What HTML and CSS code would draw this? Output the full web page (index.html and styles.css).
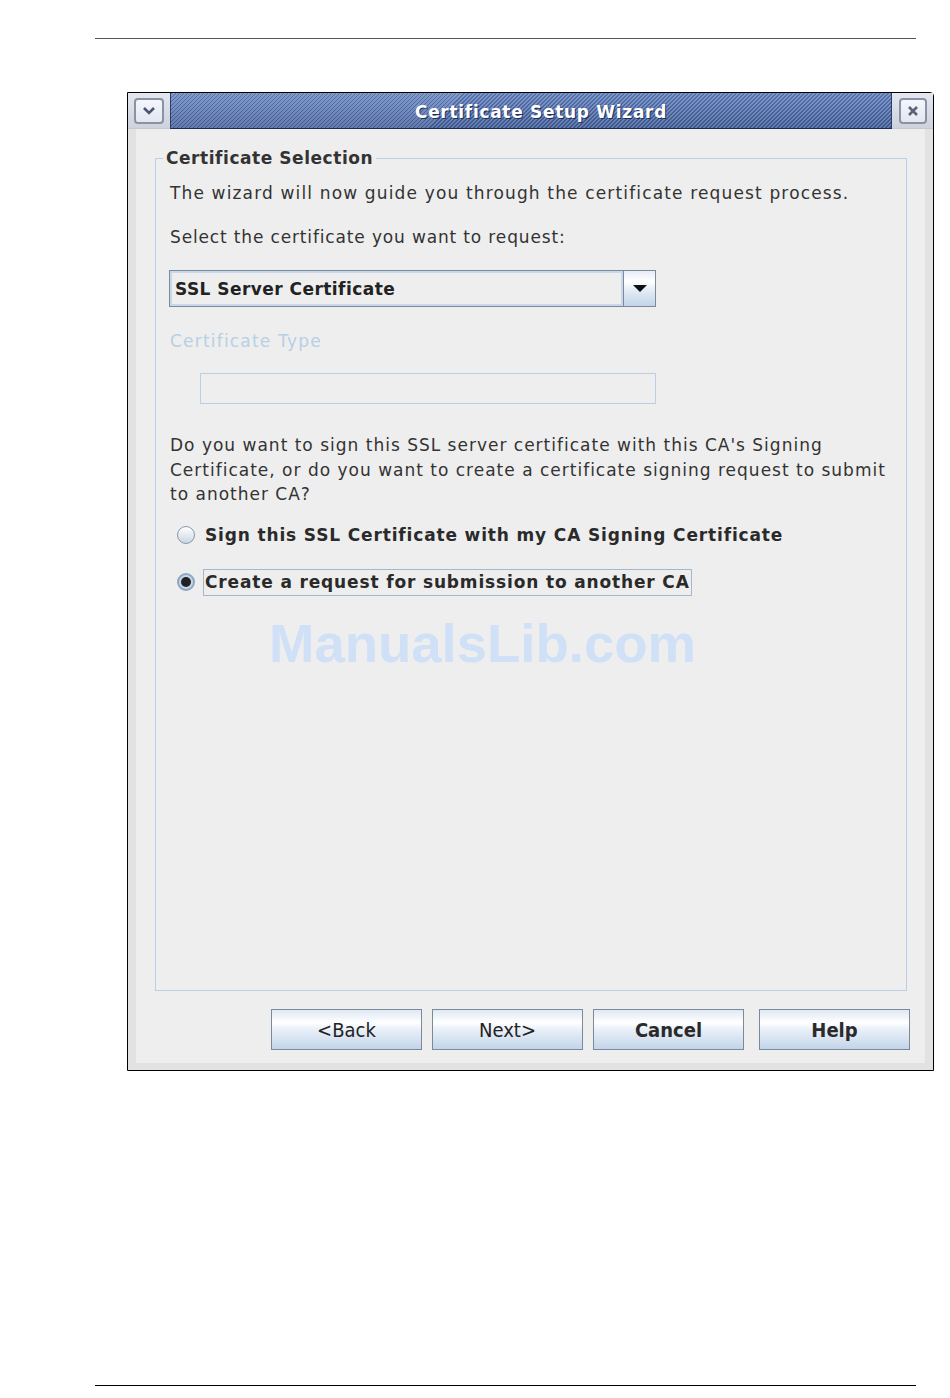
FILE: index.html
```html
<!DOCTYPE html>
<html>
  <head>
    <title>Certificate Setup Wizard</title>
    <link rel="stylesheet" href="styles.css">
  </head>
  <body>
    <div class="page">
      <div class="rule rule-top"></div>

      <div class="window">
        <div class="titlebar">
          <div class="tb-side">
            <span class="tb-btn">
              <svg width="14" height="10" viewBox="0 0 14 10">
                <path d="M2 2 L7 7 L12 2" fill="none" stroke="#4b5572" stroke-width="2.6"/>
              </svg>
            </span>
          </div>
          <div class="tb-title">Certificate Setup Wizard</div>
          <div class="tb-side tb-side-right">
            <span class="tb-btn tb-btn-close">
              <svg width="12" height="12" viewBox="0 0 12 12">
                <path d="M2 2 L10 10 M10 2 L2 10" fill="none" stroke="#5a6478" stroke-width="2.6"/>
              </svg>
            </span>
          </div>
        </div>

        <div class="frame">
          <div class="content">
            <fieldset class="group">
              <legend>Certificate Selection</legend>
              <p class="intro">The wizard will now guide you through the certificate request process.</p>
              <p class="intro intro-second">Select the certificate you want to request:</p>

              <div class="combo">
                <span class="combo-text">SSL Server Certificate</span>
                <span class="combo-arrow">
                  <svg width="14" height="7" viewBox="0 0 14 7"><polygon points="0,0 14,0 7,7" fill="#111"/></svg>
                </span>
              </div>

              <div class="disabled-label">Certificate Type</div>
              <div class="disabled-field"></div>

              <p class="question">Do you want to sign this SSL server certificate with this CA's Signing<br>Certificate, or do you want to create a certificate signing request to submit<br>to another CA?</p>

              <div class="radios">
                <label class="radio">
                  <span class="radio-dot"></span>
                  <span class="radio-text">Sign this SSL Certificate with my CA Signing Certificate</span>
                </label>
                <label class="radio radio-checked">
                  <span class="radio-dot"><span class="radio-mark"></span></span>
                  <span class="radio-text radio-focus">Create a request for submission to another CA</span>
                </label>
              </div>

              <div class="watermark">ManualsLib.com</div>
            </fieldset>

            <div class="buttons">
              <button class="button button-light">&lt;Back</button>
              <button class="button button-light">Next&gt;</button>
              <button class="button">Cancel</button>
              <button class="button button-help">Help</button>
            </div>
          </div>
        </div>
      </div>

      <div class="rule rule-bottom"></div>
    </div>
  </body>
</html>
```

FILE: styles.css
```css
:root {
  --panel: #eeeeee;
  --frame-gray: #e2e2e2;
  --group-line: #b8cfe5;
  --control-border: #7a8a99;
  --text-primary: #333333;
  --watermark: #cfe0f7;
}

body {
  margin: 0;
  background: #ffffff;
  font-family: 'DejaVu Sans', sans-serif;
  color: var(--text-primary);
}

.page {
  height: 1398px;
  box-sizing: border-box;
  padding: 38px 0 12px;
  display: flex;
  flex-direction: column;
}

.rule {
  margin-left: 95px;
  width: 821px;
  height: 1px;
}

.rule-top {
  background: #555555;
}

.rule-bottom {
  margin-top: auto;
  background: #000000;
}

/* Window frame */
.window {
  margin: 53px 0 0 127px;
  width: 807px;
  height: 979px;
  box-sizing: border-box;
  border: 1px solid #000000;
  border-top-right-radius: 4px;
  background: var(--frame-gray);
  display: flex;
  flex-direction: column;
}

.titlebar {
  display: flex;
  height: 36px;
}

.tb-side {
  width: 42px;
  display: flex;
  align-items: center;
  justify-content: center;
  background: linear-gradient(#e4e7ee, #cdd2dc);
  border-bottom: 1px solid #c4c8d0;
}

.tb-side-right {
  width: 41px;
}

.tb-btn {
  width: 26px;
  height: 22px;
  border: 2px solid #8a92a4;
  border-radius: 4px;
  background: linear-gradient(#f4f6fb, #e2e7f1);
  display: flex;
  align-items: center;
  justify-content: center;
}

.tb-btn-close {
  width: 24px;
}

.tb-title {
  flex: 1;
  box-sizing: border-box;
  padding-left: 20px;
  border-left: 1px solid #2c3c6c;
  border-right: 1px solid #2c3c6c;
  border-bottom: 1px solid #1d2a52;
  background:
    linear-gradient(rgba(255, 255, 255, 0.1), rgba(0, 0, 0, 0.14)),
    repeating-linear-gradient(135deg, #4562a2 0 1.3px, #7490c8 1.3px 2.83px);
  color: #ffffff;
  font-size: 17px;
  font-weight: bold;
  letter-spacing: 0.7px;
  text-align: center;
  line-height: 39px;
  text-shadow: 1px 1px 0 #1e2d5c;
}

.frame {
  flex: 1;
  display: flex;
  padding: 0 8px 7px;
}

.content {
  flex: 1;
  background: var(--panel);
  display: flex;
  flex-direction: column;
  padding: 19px 15px 13px 19px;
}

/* Group box */
.group {
  flex: 1;
  min-width: 0;
  margin: 0 3px 0 0;
  padding: 14px 18px 0 14px;
  border: 1px solid var(--group-line);
}

.group legend {
  margin-left: -7px;
  padding: 0 3px;
  font-size: 17px;
  font-weight: bold;
  line-height: 20px;
  letter-spacing: 0.55px;
}

.intro {
  margin: 0;
  font-size: 17px;
  line-height: 22px;
  letter-spacing: 1.15px;
}

.intro-second {
  margin-top: 22px;
  letter-spacing: 0.85px;
}

.combo {
  margin: 22px 0 0 -1px;
  width: 487px;
  height: 37px;
  box-sizing: border-box;
  border: 1px solid var(--control-border);
  display: flex;
}

.combo-text {
  flex: 1;
  border: 2px solid #c8d8ea;
  background: var(--panel);
  display: flex;
  align-items: center;
  padding: 1px 0 0 3px;
  font-size: 17px;
  font-weight: bold;
  letter-spacing: 0.45px;
  color: #222222;
}

.combo-arrow {
  width: 31px;
  border-left: 1px solid var(--control-border);
  background: linear-gradient(#e6edf6 0%, #ffffff 30%, #e4ecf6 55%, #c2d4e8 100%);
  display: flex;
  align-items: center;
  justify-content: center;
}

.disabled-label {
  margin-top: 23px;
  font-size: 17px;
  line-height: 22px;
  letter-spacing: 1.2px;
  color: var(--group-line);
}

.disabled-field {
  margin: 21px 0 0 30px;
  width: 456px;
  height: 31px;
  box-sizing: border-box;
  border: 1px solid var(--group-line);
}

.question {
  margin: 29px 0 0;
  font-size: 17px;
  line-height: 24.5px;
  letter-spacing: 1px;
}

/* Radio buttons */
.radios {
  margin-top: 15px;
  display: flex;
  flex-direction: column;
  gap: 20px;
}

.radio {
  display: flex;
  align-items: center;
  gap: 8px;
  height: 27px;
  margin-left: 7px;
}

.radio-dot {
  width: 18px;
  height: 18px;
  box-sizing: border-box;
  border-radius: 50%;
  border: 1px solid #8798ae;
  background: linear-gradient(#ffffff, #c9d6e4);
  display: flex;
  align-items: center;
  justify-content: center;
}

.radio-checked .radio-dot {
  border: 2px solid #8ea6c2;
  background: #c8d6e8;
}

.radio-mark {
  width: 10px;
  height: 10px;
  border-radius: 50%;
  background: #222222;
}

.radio-text {
  font-size: 17px;
  font-weight: bold;
  letter-spacing: 0.85px;
  line-height: 25px;
  padding: 0 1px;
  border: 1px solid transparent;
  color: #2a2a2a;
}

.radio-focus {
  border-color: #a3b8cc;
}

.watermark {
  margin: 21px 0 0 99px;
  font-family: 'Liberation Sans', Arial, sans-serif;
  font-size: 54.5px;
  font-weight: bold;
  line-height: 54px;
  color: var(--watermark);
}

/* Dialog buttons */
.buttons {
  margin-top: 18px;
  display: flex;
  justify-content: flex-end;
  gap: 10px;
}

.button {
  width: 151px;
  height: 41px;
  border: 1px solid var(--control-border);
  border-radius: 0;
  padding: 0;
  background: linear-gradient(#dfe8f3 0%, #ffffff 32%, #e9f0f8 50%, #c3d5ea 100%);
  font-family: 'DejaVu Sans Condensed', 'DejaVu Sans', sans-serif;
  font-size: 20px;
  font-weight: bold;
  color: #2a2a2a;
}

.button-light {
  font-weight: normal;
  color: #222222;
}

.button-help {
  margin-left: 5px;
}
```
